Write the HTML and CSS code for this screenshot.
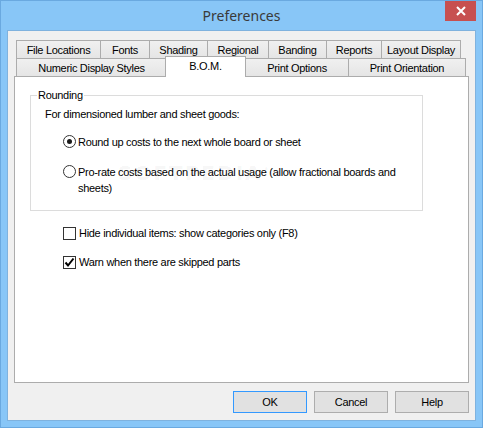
FILE: index.html
```html
<!DOCTYPE html>
<html lang="en">
<head>
<meta charset="UTF-8">
<meta name="viewport" content="width=device-width, initial-scale=1.0">
<title>Preferences</title>
<link rel="stylesheet" href="styles.css">
</head>
<body>

<div class="window">
    <div class="titlebar">
        <span class="title">Preferences</span>
        <button class="close" type="button">
            <svg width="10" height="10" viewBox="0 0 10 10">
                <path d="M1 1 L9 9 M9 1 L1 9" stroke="#fff" stroke-width="2" fill="none"/>
            </svg>
        </button>
    </div>

    <div class="client">
        <div class="tabs">
            <div class="tab-row back">
                <div class="tab">File Locations</div>
                <div class="tab">Fonts</div>
                <div class="tab">Shading</div>
                <div class="tab">Regional</div>
                <div class="tab">Banding</div>
                <div class="tab">Reports</div>
                <div class="tab">Layout Display</div>
            </div>
            <div class="tab-row front">
                <div class="tab">Numeric Display Styles</div>
                <div class="tab active">B.O.M.</div>
                <div class="tab">Print Options</div>
                <div class="tab">Print Orientation</div>
            </div>
        </div>

        <div class="panel">
            <fieldset class="group">
                <legend>Rounding</legend>
                <p class="group-note">For dimensioned lumber and sheet goods:</p>
                <label class="option radio-option">
                    <span class="radio checked"></span>
                    <span class="option-text">Round up costs to the next whole board or sheet</span>
                </label>
                <label class="option radio-option second">
                    <span class="radio"></span>
                    <span class="option-text">Pro-rate costs based on the actual usage (allow fractional boards and sheets)</span>
                </label>
            </fieldset>

            <label class="option check-option">
                <span class="checkbox"></span>
                <span class="option-text">Hide individual items: show categories only (F8)</span>
            </label>
            <label class="option check-option second">
                <span class="checkbox">
                    <svg width="11" height="11" viewBox="0 0 11 11">
                        <path d="M1.5 5.5 L4 8.5 L9.5 1.5" stroke="#000" stroke-width="2" fill="none"/>
                    </svg>
                </span>
                <span class="option-text">Warn when there are skipped parts</span>
            </label>

            <span class="watermark">SOFTPEDIA<sup>®</sup></span>
        </div>

        <div class="buttons">
            <button class="btn default" type="button">OK</button>
            <button class="btn" type="button">Cancel</button>
            <button class="btn" type="button">Help</button>
        </div>
    </div>
</div>

</body>
</html>
```

FILE: styles.css
```css
body {
    margin: 0;
    padding: 0;
    font-family: "Liberation Sans", Arial, sans-serif;
    font-size: 11px;
    letter-spacing: -0.3px;
    color: #000;
    background-color: #88c6f7;
}
.window {
    position: relative;
    width: 483px;
    height: 428px;
    box-sizing: border-box;
    border: 1px solid #6aa9e0;
    background-color: #88c6f7;
    display: flex;
    flex-direction: column;
}
.titlebar {
    height: 29px;
    display: flex;
    align-items: center;
    justify-content: center;
}
.title {
    font-family: "Noto Sans", "Liberation Sans", sans-serif;
    font-size: 14px;
    letter-spacing: 0;
    color: #3a3a3a;
    margin-top: -1px;
}
.close {
    position: absolute;
    top: 0;
    right: 6px;
    width: 31px;
    height: 20px;
    padding: 0;
    border: none;
    background-color: #c75050;
    display: flex;
    align-items: center;
    justify-content: center;
}
.client {
    flex: 1;
    margin: 0 6px 6px;
    padding: 9px 6px 7px;
    border: 1px solid #7fb2de;
    background-color: #f0f0f0;
    display: flex;
    flex-direction: column;
}

/* tabs */
.tabs {
    margin-left: 2px;
}
.tab-row {
    display: flex;
}
.tab {
    height: 18px;
    box-sizing: border-box;
    margin-right: -1px;
    border: 1px solid #acacac;
    border-bottom: none;
    background: linear-gradient(#f0f0f0, #e5e5e5);
    display: flex;
    align-items: center;
    justify-content: center;
    white-space: nowrap;
}
.back .tab:nth-child(1) { width: 85px; }
.back .tab:nth-child(2) { width: 50px; }
.back .tab:nth-child(3) { width: 59px; }
.back .tab:nth-child(4) { width: 62px; }
.back .tab:nth-child(5) { width: 59px; }
.back .tab:nth-child(6) { width: 56px; }
.back .tab:nth-child(7) { width: 80px; }
.front .tab:nth-child(1) { width: 151px; }
.front .tab:nth-child(2) { width: 80px; }
.front .tab:nth-child(3) { width: 104px; }
.front .tab:nth-child(4) { width: 118px; }
.front .tab.active {
    position: relative;
    z-index: 2;
    height: 21px;
    width: 81px;
    margin-top: -2px;
    margin-bottom: -1px;
    margin-left: -1px;
    background: #fff;
    padding-bottom: 3px;
}

/* page */
.panel {
    position: relative;
    height: 307px;
    box-sizing: border-box;
    border: 1px solid #acacac;
    background-color: #fff;
    padding-top: 12px;
}
.group {
    width: 393px;
    box-sizing: border-box;
    margin: 0 0 0 15px;
    padding: 6px 0 14px 6px;
    border: 1px solid #dcdcdc;
}
.group legend {
    padding: 0 1px;
    line-height: 13px;
}
.group-note {
    margin: 0 0 0 8px;
    line-height: 13px;
}
.option {
    display: flex;
    align-items: flex-start;
    line-height: 16px;
}
.radio-option {
    margin: 13px 0 0 26px;
    width: 350px;
}
.radio-option.second {
    margin-top: 14px;
}
.radio {
    flex: none;
    width: 13px;
    height: 13px;
    box-sizing: border-box;
    margin: 1px 2px 0 0;
    border: 1px solid #333;
    border-radius: 50%;
    background-color: #fff;
    display: flex;
    align-items: center;
    justify-content: center;
}
.radio.checked::after {
    content: "";
    width: 5px;
    height: 5px;
    border-radius: 50%;
    background-color: #1a1a1a;
}
.check-option {
    margin: 14px 0 0 48px;
}
.check-option.second {
    margin-top: 13px;
}
.checkbox {
    flex: none;
    width: 13px;
    height: 13px;
    box-sizing: border-box;
    margin: 2px 3px 0 0;
    border: 1px solid #333;
    background-color: #fff;
    display: flex;
    align-items: center;
    justify-content: center;
}
.watermark {
    position: absolute;
    left: 103px;
    top: 84px;
    font-family: "DejaVu Sans", sans-serif;
    font-size: 20px;
    font-weight: bold;
    letter-spacing: 2px;
    color: rgba(0, 0, 0, 0.05);
}
.watermark sup {
    font-size: 8px;
}

/* buttons */
.buttons {
    margin-top: 8px;
    display: flex;
    justify-content: flex-end;
    gap: 7px;
}
.btn {
    width: 74px;
    height: 22px;
    padding: 0;
    border: 1px solid #adadad;
    background-color: #e1e1e1;
    font-family: "Liberation Sans", Arial, sans-serif;
    font-size: 11px;
    letter-spacing: -0.3px;
    color: #000;
}
.btn.default {
    border-color: #3399ff;
}
```
